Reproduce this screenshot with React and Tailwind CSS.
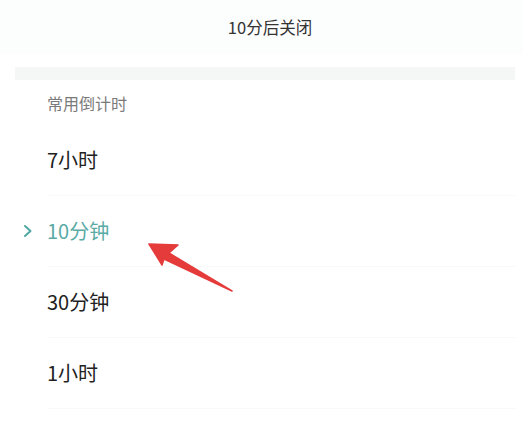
import React from "react";

const items = [
  { label: "7小时" },
  { label: "10分钟", active: true },
  { label: "30分钟" },
  { label: "1小时" },
];

const Row = ({ label, active }) => (
  <div className="relative flex items-center h-[71px] ml-[47px] mr-[8px] border-b border-[#f7f8f8]">
    {active && (
      <svg className="absolute left-[-24px] top-1/2 -translate-y-1/2" width="10" height="14" viewBox="0 0 10 14" fill="none">
        <path d="M2 2 L7.5 7 L2 12" stroke="#4fa8a4" strokeWidth="2" strokeLinecap="round" strokeLinejoin="round" />
      </svg>
    )}
    <span className={`text-[20px] ${active ? "text-[#5aaaa6]" : "text-[#222]"}`}>{label}</span>
  </div>
);

export default function App() {
  return (
    <div
      className="relative w-[523px] h-[423px] bg-white overflow-hidden"
      style={{ fontFamily: '"Noto Sans CJK SC", "Noto Sans", sans-serif' }}
    >
      <div className="h-[54px] flex items-center justify-center pl-[17px] bg-[#fcfdfd] text-[16.5px] text-[#333]">
        10分后关闭
      </div>
      <div className="mt-[13px] ml-[15px] mr-[8px] h-[13px] bg-[#f5f6f6]" />
      <div className="pt-[11px] pl-[47px] text-[16px] leading-[24px] text-[#7a7a7a]">常用倒计时</div>
      <div className="mt-[10px]">
        {items.map((it) => (
          <Row key={it.label} {...it} />
        ))}
      </div>

      <svg className="absolute left-0 top-0 pointer-events-none" width="523" height="423" viewBox="0 0 523 423">
        <polygon
          points="149,244 178,245 169,253 232,291 164,259 162,265"
          fill="#e53b3b"
          stroke="#e53b3b"
          strokeWidth="1.5"
          strokeLinejoin="round"
        />
      </svg>
    </div>
  );
}
